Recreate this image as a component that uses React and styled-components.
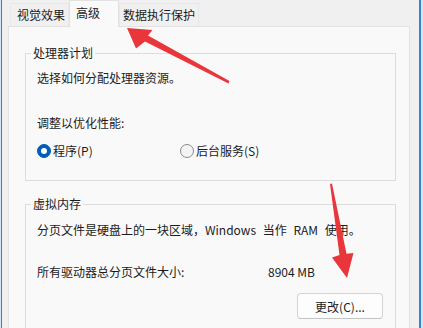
import React from 'react';
import styled, { createGlobalStyle } from 'styled-components';

const GlobalStyle = createGlobalStyle`
  html, body {
    margin: 0;
    padding: 0;
    background: #cfe0f1;
  }
  body {
    font-family: "Noto Sans CJK SC", "Noto Sans", sans-serif;
    font-size: 12px;
    color: #1b1b1b;
  }
`;

const Screen = styled.div`
  position: relative;
  width: 423px;
  height: 328px;
  overflow: hidden;
  background: #d6e5f4;
`;

const Dialog = styled.div`
  margin-left: 1px;
  width: 417px;
  height: 328px;
  border-left: 1px solid #3b82cb;
  border-right: 2px solid #3b82cb;
  background: #f0f0f0;
  display: flex;
  flex-direction: column;
`;

const TabStrip = styled.div`
  display: flex;
  align-items: flex-end;
  height: 26px;
  padding-left: 8px;
  position: relative;
  z-index: 1;
`;

const Tab = styled.div`
  box-sizing: border-box;
  width: ${p => p.$width}px;
  height: ${p => (p.$active ? 27 : 23)}px;
  padding-left: ${p => p.$pad}px;
  margin-bottom: ${p => (p.$active ? -1 : 0)}px;
  background: ${p => (p.$active ? '#f9f9f9' : '#f0f0f0')};
  border: 1px solid ${p => (p.$active ? '#e2e2e2' : '#e8e8e8')};
  border-bottom: none;
  line-height: ${p => (p.$active ? 24 : 22)}px;
  white-space: nowrap;
`;

const Panel = styled.div`
  flex: 1;
  margin-left: 6px;
  width: 402px;
  box-sizing: border-box;
  background: #f9f9f9;
  border: 1px solid #e2e2e2;
  border-bottom: none;
  padding: 18px 13px 0 16px;
`;

const Group = styled.fieldset`
  margin: ${p => p.$top}px 0 0 0;
  padding: 0 11px ${p => p.$bottom}px 11px;
  border: 1px solid #dcdcdc;
  min-width: 0;
`;

const Legend = styled.legend`
  margin-left: -6px;
  padding: 0 2px;
  line-height: 16px;
`;

const Line = styled.div`
  line-height: 16px;
  margin-top: ${p => p.$top}px;
  word-spacing: ${p => p.$words || 0}px;
  white-space: nowrap;
`;

const Options = styled.div`
  display: grid;
  grid-template-columns: 143px auto;
  margin-top: 12px;
`;

const Option = styled.label`
  display: flex;
  align-items: center;
  gap: 2px;
  line-height: 16px;
`;

const Radio = styled.span`
  box-sizing: border-box;
  width: 14px;
  height: 14px;
  border-radius: 50%;
  display: flex;
  align-items: center;
  justify-content: center;
  background: ${p => (p.$checked ? '#005fb8' : '#f4f4f4')};
  border: 1px solid ${p => (p.$checked ? '#005fb8' : '#8b8b8b')};
  &::after {
    content: '';
    display: ${p => (p.$checked ? 'block' : 'none')};
    width: 6px;
    height: 6px;
    border-radius: 50%;
    background: #ffffff;
  }
`;

const SizeRow = styled.div`
  display: grid;
  grid-template-columns: 231px auto;
  line-height: 16px;
  margin-top: 26px;
`;

const Actions = styled.div`
  display: flex;
  justify-content: flex-end;
  margin-top: 13px;
  padding-right: 1px;
`;

const Button = styled.button`
  box-sizing: border-box;
  width: 86px;
  height: 26px;
  font: inherit;
  color: inherit;
  background: #fdfdfd;
  border: 1px solid #d3d3d3;
  border-bottom-color: #c4c4c4;
  border-radius: 4px;
  padding: 0;
`;

const Overlay = styled.svg`
  position: absolute;
  left: 0;
  top: 0;
  pointer-events: none;
  z-index: 5;
`;

export default function App() {
  return (
    <>
      <GlobalStyle />
      <Screen>
        <Dialog>
          <TabStrip>
            <Tab $width={59} $pad={6}>视觉效果</Tab>
            <Tab $width={50} $pad={6} $active>高级</Tab>
            <Tab $width={80} $pad={3}>数据执行保护</Tab>
          </TabStrip>
          <Panel>
            <Group $top={0} $bottom={21}>
              <Legend>处理器计划</Legend>
              <Line $top={9}>选择如何分配处理器资源。</Line>
              <Line $top={29}>调整以优化性能:</Line>
              <Options>
                <Option>
                  <Radio $checked />
                  程序(P)
                </Option>
                <Option>
                  <Radio />
                  后台服务(S)
                </Option>
              </Options>
            </Group>
            <Group $top={15} $bottom={20}>
              <Legend>虚拟内存</Legend>
              <Line $top={10} $words={4}>
                分页文件是硬盘上的一块区域，Windows 当作 RAM 使用。
              </Line>
              <SizeRow>
                <span>所有驱动器总分页文件大小:</span>
                <span>8904 MB</span>
              </SizeRow>
              <Actions>
                <Button>更改(C)...</Button>
              </Actions>
            </Group>
          </Panel>
        </Dialog>
        <Overlay width="423" height="328" viewBox="0 0 423 328">
          <polygon
            fill="#e8363b"
            points="127,28 152.5,30 148,35.6 229.5,81 228.5,83.5 145,41.5 136,48.5"
          />
          <polygon
            fill="#e8363b"
            points="347,278 353.5,253 346.5,253.7 332,183.5 330,184 339.5,254.9 332,257.5"
          />
        </Overlay>
      </Screen>
    </>
  );
}
